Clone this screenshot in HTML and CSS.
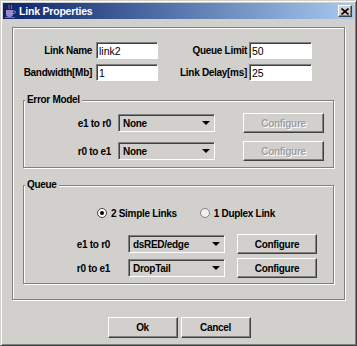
FILE: index.html
```html
<!DOCTYPE html>
<html lang="en">

<head>
    <meta charset="UTF-8">
    <title>Link Properties</title>
    <link rel="stylesheet" href="styles.css">
</head>

<body>
    <div class="window">
        <div class="titlebar">
            <svg class="app-icon" viewBox="0 0 12 14">
                <path d="M5 1c-1 1.5 1 2.5 0 4M7.5 1c-1 1.5 1 2.5 0 4" stroke="#e05050" fill="none" stroke-width="1" />
                <path d="M2 6h7v4a3 3 0 0 1-3 3h-1a3 3 0 0 1-3-3z" fill="#9a88c8" />
                <path d="M9 7h1.3a1.2 1.2 0 0 1 0 2.4H9" stroke="#9a88c8" fill="none" />
                <path d="M1 13.5h10" stroke="#c05070" />
            </svg>
            <span class="title">Link Properties</span>
            <span class="close">
                <svg viewBox="0 0 8 7" width="8" height="7">
                    <path d="M0.5 0.5l7 6M7.5 0.5l-7 6" stroke="#000" stroke-width="1.6" />
                </svg>
            </span>
        </div>

        <div class="panel">
            <div class="fields">
                <label class="lbl" for="linkName">Link Name</label>
                <input class="text-field field-a" id="linkName" value="link2">
                <label class="lbl lbl-b" for="queueLimit">Queue Limit</label>
                <input class="text-field field-b" id="queueLimit" value="50">

                <label class="lbl" for="bandwidth">Bandwidth[Mb]</label>
                <input class="text-field field-a" id="bandwidth" value="1">
                <label class="lbl lbl-b" for="delay">Link Delay[ms]</label>
                <input class="text-field field-b" id="delay" value="25">
            </div>

            <fieldset class="group error-group">
                <legend>Error Model</legend>
                <div class="rows error-rows">
                    <span class="lbl">e1 to r0</span>
                    <div class="combo">None<i class="arrow"></i></div>
                    <button class="btn" disabled>Configure</button>

                    <span class="lbl">r0 to e1</span>
                    <div class="combo">None<i class="arrow"></i></div>
                    <button class="btn" disabled>Configure</button>
                </div>
            </fieldset>

            <fieldset class="group queue-group">
                <legend>Queue</legend>
                <div class="radios">
                    <span class="radio"><i class="radio-mark checked"></i>2 Simple Links</span>
                    <span class="radio"><i class="radio-mark"></i>1 Duplex Link</span>
                </div>
                <div class="rows queue-rows">
                    <span class="lbl">e1 to r0</span>
                    <div class="combo">dsRED/edge<i class="arrow"></i></div>
                    <button class="btn">Configure</button>

                    <span class="lbl">r0 to e1</span>
                    <div class="combo">DropTail<i class="arrow"></i></div>
                    <button class="btn">Configure</button>
                </div>
            </fieldset>
        </div>

        <div class="actions">
            <button class="btn btn-wide">Ok</button>
            <button class="btn btn-wide">Cancel</button>
        </div>
    </div>
</body>

</html>
```

FILE: styles.css
```css
* {
    box-sizing: border-box;
}

body {
    margin: 0;
    font-family: "Liberation Sans", Arial, sans-serif;
    font-size: 10px;
    background-color: #d2d0cc;
}

.window {
    width: 357px;
    height: 346px;
    padding: 2px;
    border: 1px solid;
    border-color: #d2d0cc #404040 #404040 #d2d0cc;
    box-shadow: inset 1px 1px 0 #fff, inset -1px -1px 0 #808080;
    background-color: #d2d0cc;
}

.titlebar {
    display: flex;
    align-items: center;
    height: 16px;
    background: linear-gradient(to right, #0a246a, #a6caf0);
    color: #fff;
}

.app-icon {
    width: 12px;
    height: 14px;
    margin: 0 3px 0 1px;
}

.title {
    flex: 1;
    font-size: 10.5px;
    font-weight: bold;
    letter-spacing: -0.2px;
}

.close {
    display: flex;
    align-items: center;
    justify-content: center;
    width: 14px;
    height: 12px;
    margin-right: 2px;
    border: 1px solid;
    border-color: #fff #404040 #404040 #fff;
    box-shadow: inset -1px -1px 0 #808080;
    background-color: #d2d0cc;
}

.panel {
    margin: 8px 9px 0;
    padding: 14px 0 15px;
    border: 1px solid #808080;
    box-shadow: inset 1px 1px 0 #fff, 1px 1px 0 #fff;
}

.lbl,
.group legend,
.combo,
.radio,
.btn {
    font-family: "Liberation Sans", Arial, sans-serif;
    font-size: 10px;
    font-weight: bold;
    letter-spacing: -0.3px;
}

.lbl {
    text-align: right;
    white-space: nowrap;
    color: #000;
}

.fields {
    display: grid;
    grid-template-columns: 79px 66px 91px 63px;
    grid-auto-rows: 17px;
    row-gap: 5px;
    align-items: center;
}

.lbl-b {
    padding-right: 2px;
}

.text-field {
    height: 17px;
    padding: 0 2px;
    border: 1px solid;
    border-color: #808080 #fff #fff #808080;
    box-shadow: inset 1px 1px 0 #404040;
    background-color: #fff;
    font-family: "Liberation Sans", Arial, sans-serif;
    font-size: 10.5px;
    color: #000;
    outline: none;
}

.field-a {
    width: 62px;
    margin-left: 4px;
}

.field-b {
    width: 63px;
}

.group {
    min-width: 0;
    margin: 13px 10px 0;
    padding: 7px 0 6px;
    border: 1px solid #808080;
    box-shadow: inset 1px 1px 0 #fff, 1px 1px 0 #fff;
}

.group legend {
    margin-left: 1px;
    padding: 0 2px;
    line-height: 12px;
    background-color: #d2d0cc;
}

.queue-group {
    margin-top: 11px;
    padding: 15px 0 5px;
}

.rows {
    display: grid;
    grid-auto-rows: 20px;
    align-items: center;
}

.error-rows {
    grid-template-columns: 87px 104px 109px;
    row-gap: 8px;
}

.queue-rows {
    grid-template-columns: 86px 115px 92px;
    row-gap: 4px;
}

.combo {
    display: flex;
    align-items: center;
    justify-content: space-between;
    width: 97px;
    height: 18px;
    padding: 0 4px 0 4px;
    border: 1px solid;
    border-color: #808080 #fff #fff #808080;
    box-shadow: inset 1px 1px 0 #404040;
}

.error-rows .combo {
    margin-left: 7px;
}

.queue-rows .combo {
    margin-left: 18px;
}

.arrow {
    width: 0;
    height: 0;
    border-left: 4px solid transparent;
    border-right: 4px solid transparent;
    border-top: 4px solid #000;
}

.btn {
    height: 20px;
    padding: 0;
    border: 1px solid;
    border-color: #fff #404040 #404040 #fff;
    box-shadow: inset -1px -1px 0 #808080;
    background-color: #d2d0cc;
    color: #000;
}

.btn:disabled {
    color: #a0a0a0;
    text-shadow: 1px 1px 0 #fff;
}

.rows .btn {
    justify-self: end;
}

.error-rows .btn {
    width: 81px;
}

.queue-rows .btn {
    width: 80px;
}

.radios {
    display: flex;
    align-items: center;
    gap: 23px;
    height: 14px;
    padding-left: 73px;
    margin-bottom: 14px;
}

.radio {
    display: flex;
    align-items: center;
    gap: 4px;
}

.radio-mark {
    display: flex;
    align-items: center;
    justify-content: center;
    width: 10px;
    height: 10px;
    border: 1px solid #808080;
    border-radius: 50%;
    background-color: #f0f0f0;
}

.radio-mark.checked {
    border-color: #404040;
    background-color: #fff;
}

.radio-mark.checked::after {
    content: "";
    width: 4px;
    height: 4px;
    border-radius: 50%;
    background-color: #000;
}

.actions {
    display: flex;
    justify-content: center;
    gap: 3px;
    margin-top: 17px;
    padding-left: 1px;
}

.btn-wide {
    width: 70px;
    height: 21px;
}
```
